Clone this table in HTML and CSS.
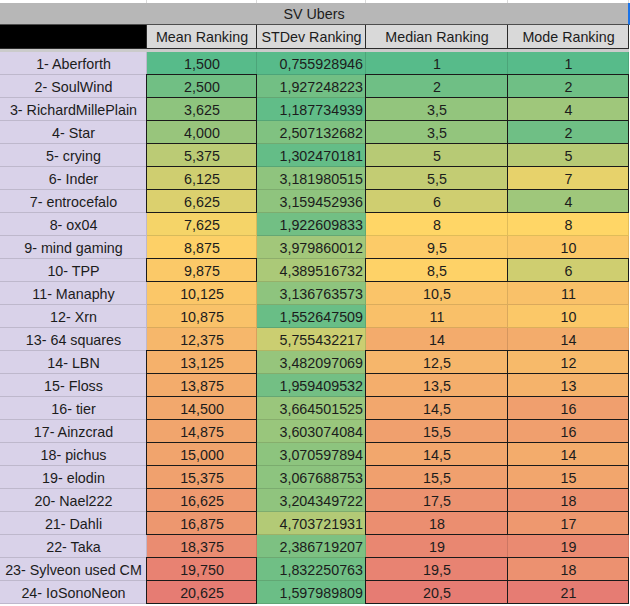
FILE: index.html
```html
<!DOCTYPE html>
<html lang="it">
<head>
<meta charset="utf-8">
<title>SV Ubers</title>
<link rel="stylesheet" href="styles.css">
</head>
<body>
<div class="sheet">
  <div class="row top"><div class="cell"></div><div class="cell"></div><div class="cell"></div><div class="cell"></div><div class="cell"></div></div>
  <div class="title">SV Ubers</div>
  <div class="row head">
    <div class="cell corner"></div>
    <div class="cell">Mean Ranking</div>
    <div class="cell">STDev Ranking</div>
    <div class="cell">Median Ranking</div>
    <div class="cell">Mode Ranking</div>
  </div>
  <div class="freeze"></div>
  <div class="rows">
    <div class="row data"><div class="cell name">1- Aberforth</div><div class="cell sc">1,500</div><div class="cell sc sd">0,755928946</div><div class="cell sc">1</div><div class="cell sc">1</div></div>
    <div class="row data"><div class="cell name">2- SoulWind</div><div class="cell sc b">2,500</div><div class="cell sc sd">1,927248223</div><div class="cell sc b">2</div><div class="cell sc b">2</div></div>
    <div class="row data"><div class="cell name">3- RichardMillePlain</div><div class="cell sc b">3,625</div><div class="cell sc sd">1,187734939</div><div class="cell sc b">3,5</div><div class="cell sc b">4</div></div>
    <div class="row data"><div class="cell name">4- Star</div><div class="cell sc b">4,000</div><div class="cell sc sd">2,507132682</div><div class="cell sc b">3,5</div><div class="cell sc b">2</div></div>
    <div class="row data"><div class="cell name">5- crying</div><div class="cell sc b">5,375</div><div class="cell sc sd">1,302470181</div><div class="cell sc b">5</div><div class="cell sc b">5</div></div>
    <div class="row data"><div class="cell name">6- Inder</div><div class="cell sc b">6,125</div><div class="cell sc sd">3,181980515</div><div class="cell sc b">5,5</div><div class="cell sc b">7</div></div>
    <div class="row data"><div class="cell name">7- entrocefalo</div><div class="cell sc b">6,625</div><div class="cell sc sd">3,159452936</div><div class="cell sc b">6</div><div class="cell sc b">4</div></div>
    <div class="row data"><div class="cell name">8- ox04</div><div class="cell sc">7,625</div><div class="cell sc sd">1,922609833</div><div class="cell sc">8</div><div class="cell sc">8</div></div>
    <div class="row data"><div class="cell name">9- mind gaming</div><div class="cell sc">8,875</div><div class="cell sc sd">3,979860012</div><div class="cell sc">9,5</div><div class="cell sc">10</div></div>
    <div class="row data"><div class="cell name">10- TPP</div><div class="cell sc b">9,875</div><div class="cell sc sd">4,389516732</div><div class="cell sc b">8,5</div><div class="cell sc b">6</div></div>
    <div class="row data"><div class="cell name">11- Manaphy</div><div class="cell sc">10,125</div><div class="cell sc sd">3,136763573</div><div class="cell sc">10,5</div><div class="cell sc">11</div></div>
    <div class="row data"><div class="cell name">12- Xrn</div><div class="cell sc">10,875</div><div class="cell sc sd">1,552647509</div><div class="cell sc">11</div><div class="cell sc">10</div></div>
    <div class="row data"><div class="cell name">13- 64 squares</div><div class="cell sc">12,375</div><div class="cell sc sd">5,755432217</div><div class="cell sc">14</div><div class="cell sc">14</div></div>
    <div class="row data"><div class="cell name">14- LBN</div><div class="cell sc b">13,125</div><div class="cell sc sd">3,482097069</div><div class="cell sc b">12,5</div><div class="cell sc b">12</div></div>
    <div class="row data"><div class="cell name">15- Floss</div><div class="cell sc b">13,875</div><div class="cell sc sd">1,959409532</div><div class="cell sc b">13,5</div><div class="cell sc b">13</div></div>
    <div class="row data"><div class="cell name">16- tier</div><div class="cell sc b">14,500</div><div class="cell sc sd">3,664501525</div><div class="cell sc b">14,5</div><div class="cell sc b">16</div></div>
    <div class="row data"><div class="cell name">17- Ainzcrad</div><div class="cell sc b">14,875</div><div class="cell sc sd">3,603074084</div><div class="cell sc b">15,5</div><div class="cell sc b">16</div></div>
    <div class="row data"><div class="cell name">18- pichus</div><div class="cell sc b">15,000</div><div class="cell sc sd">3,070597894</div><div class="cell sc b">14,5</div><div class="cell sc b">14</div></div>
    <div class="row data"><div class="cell name">19- elodin</div><div class="cell sc b">15,375</div><div class="cell sc sd">3,067688753</div><div class="cell sc b">15,5</div><div class="cell sc b">15</div></div>
    <div class="row data"><div class="cell name">20- Nael222</div><div class="cell sc b">16,625</div><div class="cell sc sd">3,204349722</div><div class="cell sc b">17,5</div><div class="cell sc b">18</div></div>
    <div class="row data"><div class="cell name">21- Dahli</div><div class="cell sc b">16,875</div><div class="cell sc sd">4,703721931</div><div class="cell sc b">18</div><div class="cell sc b">17</div></div>
    <div class="row data"><div class="cell name">22- Taka</div><div class="cell sc">18,375</div><div class="cell sc sd">2,386719207</div><div class="cell sc">19</div><div class="cell sc">19</div></div>
    <div class="row data"><div class="cell name">23- Sylveon used CM</div><div class="cell sc b">19,750</div><div class="cell sc sd">1,832250763</div><div class="cell sc b">19,5</div><div class="cell sc b">18</div></div>
    <div class="row data"><div class="cell name">24- IoSonoNeon</div><div class="cell sc b">20,625</div><div class="cell sc sd">1,597989809</div><div class="cell sc b">20,5</div><div class="cell sc b">21</div></div>
  </div>
</div>
<script src="script.js"></script>
</body>
</html>
```

FILE: styles.css
```css
* { box-sizing: border-box; }
html, body { margin: 0; padding: 0; background: #fff; }
body {
  font-family: "Liberation Sans", Arial, sans-serif;
  font-size: 14.3px;
  color: #1c1c1c;
}
.sheet { width: 630px; }
.row {
  display: grid;
  grid-template-columns: 147px 110px 109px 142px 121px;
  height: 23px;
}
.cell {
  display: flex;
  align-items: center;
  justify-content: center;
  white-space: nowrap;
  overflow: hidden;
  box-shadow: inset -1px -1px 0 rgba(0, 0, 0, 0.12);
}
.row.top { height: 3px; }
.row.top .cell { box-shadow: inset -1px 0 0 #dadada; }
.title {
  height: 22px;
  width: 630px;
  background: #b7b7b7;
  border-bottom: 1px solid #4d4d4d;
  border-right: 2px solid #1a73e8;
  display: flex;
  align-items: center;
  justify-content: center;
  padding-right: 0;
}
.row.head { height: 24px; }
.row.head .cell {
  background: #d9d9d9;
  box-shadow: inset -1px -1px 0 #2b2b2b;
}
.row.head .cell.corner { background: #000; }
.freeze { height: 3px; width: 629px; background: #cbcbcb; }
.cell.name { background: #d9d2e9; }
.cell.sd { justify-content: flex-end; padding-right: 3px; }
.cell.b {
  position: relative;
  z-index: 1;
  box-shadow: inset -1px -1px 0 #1a1a1a, -1px -1px 0 #1a1a1a, -1px 0 0 #1a1a1a, 0 -1px 0 #1a1a1a;
}
```

FILE: script.js
```js
(function () {
  var G = [87, 187, 138], Y = [255, 214, 102], R = [230, 124, 115], MID = 8;
  function mix(a, b, t) {
    t = Math.max(0, Math.min(1, t));
    return 'rgb(' + a.map(function (v, i) { return Math.round(v + (b[i] - v) * t); }).join(',') + ')';
  }
  var rows = document.querySelectorAll('.row.data');
  for (var c = 1; c <= 4; c++) {
    var cells = [], vals = [];
    rows.forEach(function (r) {
      var cell = r.children[c];
      cells.push(cell);
      vals.push(parseFloat(cell.textContent.replace(',', '.')));
    });
    var min = Math.min.apply(null, vals), max = Math.max.apply(null, vals);
    cells.forEach(function (cell, i) {
      var v = vals[i], col;
      if (v <= MID) col = mix(G, Y, (v - min) / (MID - min));
      else col = mix(Y, R, (v - MID) / (max - MID));
      cell.style.backgroundColor = col;
    });
  }
})();
```
